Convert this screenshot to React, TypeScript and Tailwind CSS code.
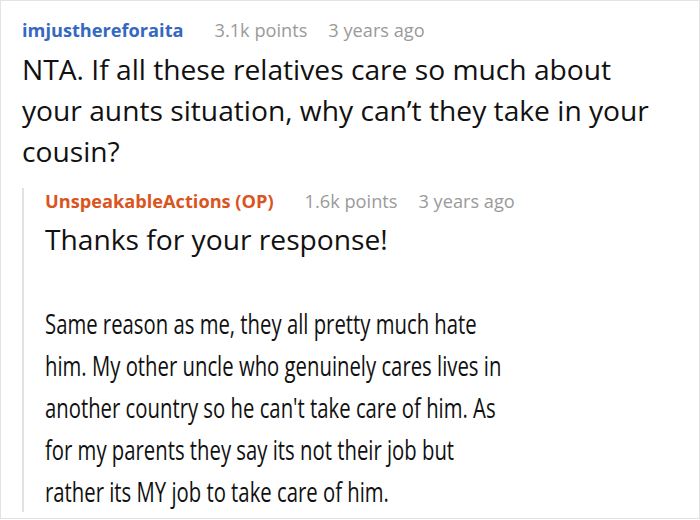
export default function App() {
  return (
    <div
      className="h-[519px] w-[700px] overflow-hidden border border-[#e3e3e3] bg-white"
      style={{ fontFamily: '"Open Sans", "Noto Sans", sans-serif' }}
    >
      <div className="pl-[21px] pt-[16px]">
        <div className="flex items-center text-[18.2px] leading-[26px]">
          <span className="font-bold text-[#3568c0]">imjusthereforaita</span>
          <span className="ml-[31px] text-[#9a9a9a]">3.1k points</span>
          <span className="ml-[21px] text-[#9a9a9a]">3 years ago</span>
        </div>
        <p className="mt-[6px] w-[640px] text-[28.2px] leading-[41px] text-[#111]">
          NTA. If all these relatives care so much about your aunts situation, why can’t they take in your cousin?
        </p>

        {/* reply */}
        <div className="mt-[28px] border-l-2 border-[#e2e2e2] pl-[21px]">
          <div className="-mt-[12px] flex items-center text-[18.2px] leading-[26px]">
            <span className="font-bold text-[#d9541e]">UnspeakableActions (OP)</span>
            <span className="ml-[31px] text-[#9a9a9a]">1.6k points</span>
            <span className="ml-[21px] text-[#9a9a9a]">3 years ago</span>
          </div>
          <p className="mt-[4px] text-[28.2px] leading-[42px] text-[#111]">Thanks for your response!</p>
          <div className="h-[42px]" />
          <p className="-mb-[7px] w-[653px] origin-left scale-x-[0.72] text-[28.2px] leading-[42px] text-[#111]">
            Same reason as me, they all pretty much hate him. My other uncle who genuinely cares lives in another country so he can't take care of him. As for my parents they say its not their job but rather its MY job to take care of him.
          </p>
        </div>
      </div>
    </div>
  );
}
